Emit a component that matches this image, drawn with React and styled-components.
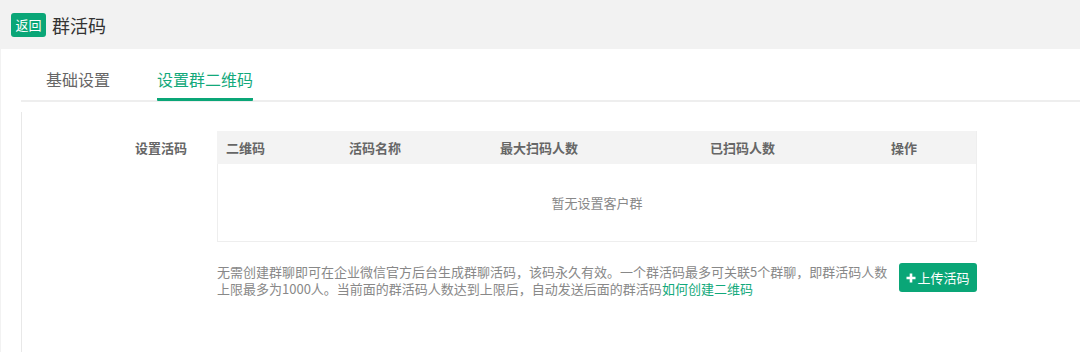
import React from "react";
import styled, { createGlobalStyle } from "styled-components";

const GlobalStyles = createGlobalStyle`
  body {
    margin: 0;
    background: #f2f2f2;
    font-family: "Microsoft YaHei", "Noto Sans CJK SC", "Noto Sans", sans-serif;
  }
`;

const green = "#0aa677";

const Page = styled.div`
  width: 1080px;
  height: 352px;
  overflow: hidden;
  display: flex;
  flex-direction: column;
`;

const Header = styled.div`
  height: 49px;
  display: flex;
  align-items: center;
  padding-left: 11px;
  box-sizing: border-box;
`;

const BackButton = styled.span`
  width: 35px;
  height: 24px;
  border-radius: 3px;
  background: ${green};
  color: #fff;
  font-size: 13px;
  display: flex;
  align-items: center;
  justify-content: center;
`;

const Title = styled.h1`
  margin: 0 0 0 6px;
  font-size: 18px;
  font-weight: 400;
  color: #333;
`;

const Panel = styled.div`
  flex: 1;
  margin-left: 1px;
  background: #fff;
  display: flex;
  flex-direction: column;
`;

const TabBar = styled.div`
  margin-left: 20px;
  padding-left: 25px;
  display: flex;
  gap: 47px;
  border-bottom: 2px solid #eeeeee;
`;

const Tab = styled.div`
  padding: 19px 0 8px;
  line-height: 22px;
  font-size: 16px;
  margin-bottom: -1px;
  color: ${(p) => (p.$active ? "#13a97b" : "#666")};
  border-bottom: 3px solid ${(p) => (p.$active ? green : "transparent")};
  border-radius: 0 0 1px 1px;
`;

const Content = styled.div`
  flex: 1;
  margin: 10px 0 0 20px;
  border-left: 1px solid #e8e8e8;
  padding-top: 19px;
  display: grid;
  grid-template-columns: 165px 760px;
  column-gap: 30px;
  row-gap: 21px;
  align-content: start;
`;

const Label = styled.div`
  text-align: right;
  line-height: 34px;
  font-size: 13px;
  font-weight: 700;
  color: #666;
`;

const Table = styled.div`
  border: 1px solid #eeeeee;
  box-sizing: border-box;
`;

const HeadRow = styled.div`
  display: grid;
  grid-template-columns: 123px 151px 210px 181px 1fr;
  height: 33px;
  background: #f3f3f3;
  margin-top: -1px;
  margin-left: -1px;
`;

const HeadCell = styled.div`
  padding-left: 9px;
  line-height: 34px;
  font-size: 13px;
  font-weight: 700;
  color: #666;
`;

const Empty = styled.div`
  height: 77px;
  display: flex;
  align-items: center;
  justify-content: center;
  font-size: 13px;
  color: #888;
`;

const Footer = styled.div`
  grid-column: 2;
  display: flex;
  align-items: flex-start;
  gap: 8px;
`;

const Note = styled.p`
  flex: 1;
  margin: 0;
  font-size: 13px;
  line-height: 17px;
  color: #888;
`;

const Link = styled.a`
  color: #13a97b;
  text-decoration: none;
`;

const UploadButton = styled.button`
  width: 78px;
  height: 29px;
  border: none;
  border-radius: 3px;
  background: ${green};
  color: #fff;
  font-family: inherit;
  font-size: 13px;
  display: flex;
  align-items: center;
  justify-content: center;
  gap: 1px;
  padding: 0;
`;

const PlusIcon = () => (
  <svg width="10" height="10" viewBox="0 0 10 10">
    <path d="M5 0.5v9M0.5 5h9" stroke="#fff" strokeWidth="2.6" />
  </svg>
);

const columns = ["二维码", "活码名称", "最大扫码人数", "已扫码人数", "操作"];

export default function App() {
  return (
    <Page>
      <GlobalStyles />
      <Header>
        <BackButton>返回</BackButton>
        <Title>群活码</Title>
      </Header>
      <Panel>
        <TabBar>
          <Tab>基础设置</Tab>
          <Tab $active>设置群二维码</Tab>
        </TabBar>
        <Content>
          <Label>设置活码</Label>
          <Table>
            <HeadRow>
              {columns.map((c) => (
                <HeadCell key={c}>{c}</HeadCell>
              ))}
            </HeadRow>
            <Empty>暂无设置客户群</Empty>
          </Table>
          <Footer>
            <Note>
              无需创建群聊即可在企业微信官方后台生成群聊活码，该码永久有效。一个群活码最多可关联5个群聊，即群活码人数上限最多为1000人。当前面的群活码人数达到上限后，自动发送后面的群活码
              <Link href="#">如何创建二维码</Link>
            </Note>
            <UploadButton>
              <PlusIcon />
              上传活码
            </UploadButton>
          </Footer>
        </Content>
      </Panel>
    </Page>
  );
}
